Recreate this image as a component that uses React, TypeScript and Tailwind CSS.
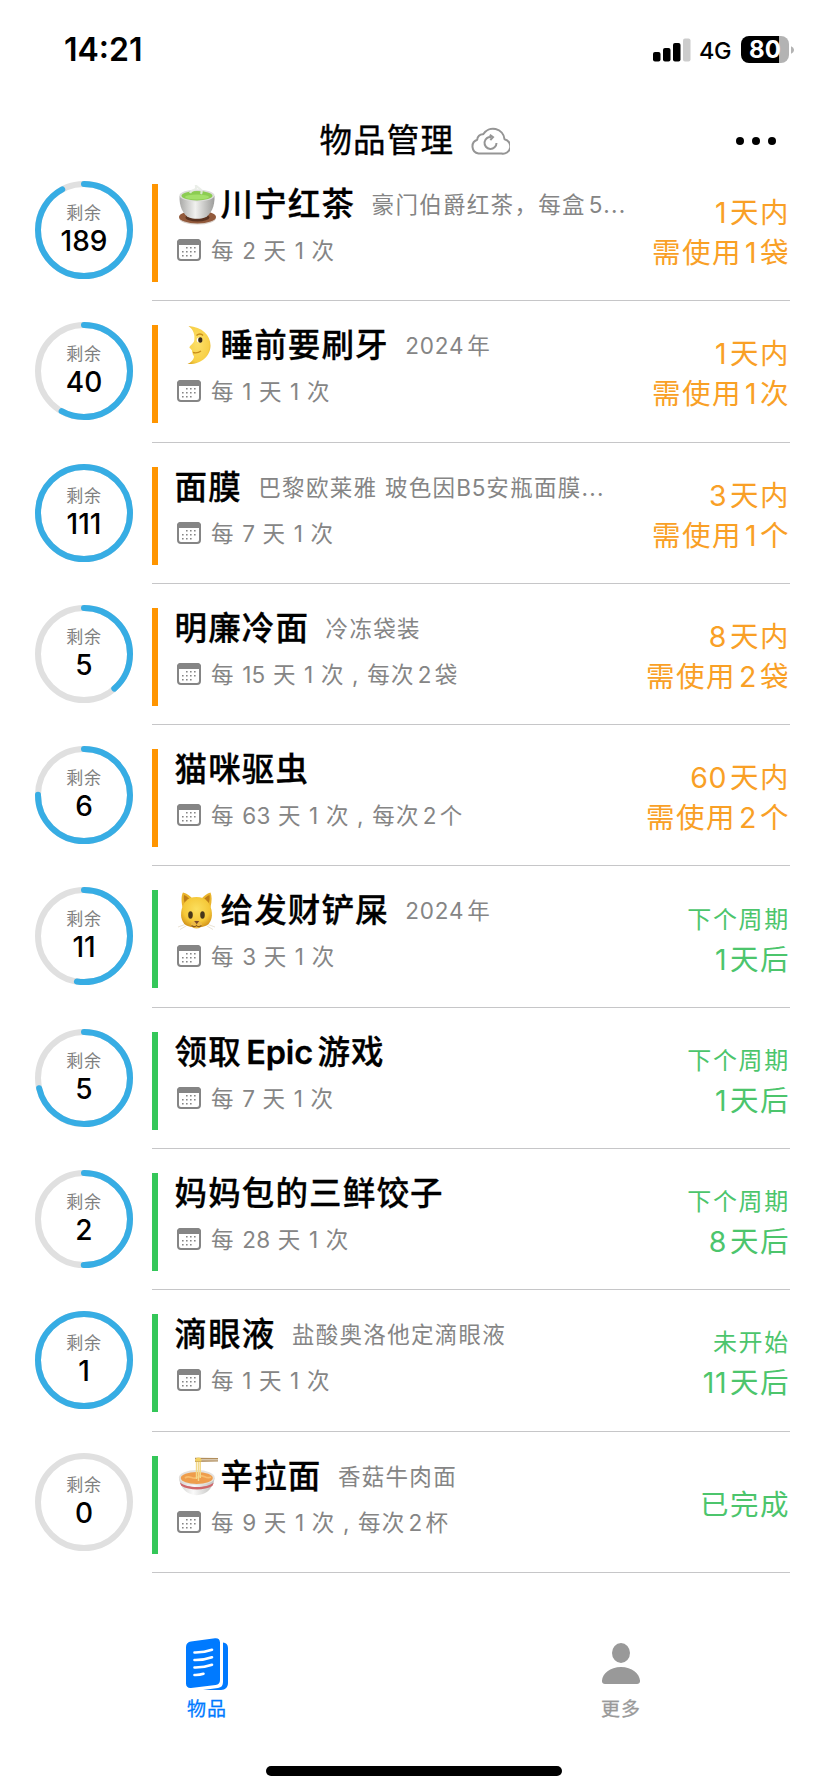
import React from "react";

type EmojiName = "tea" | "moon" | "cat" | "noodle";

type Item = {
  left: string;
  ratio: number;
  tone: "orange" | "green";
  emoji?: EmojiName;
  title: string;
  note?: string;
  cycle: string;
  status: string[];
};

const items: Item[] = [
  { left: "189", ratio: 0.92, tone: "orange", emoji: "tea", title: "川宁红茶", note: "豪门伯爵红茶，每盒5...", cycle: "每 2 天 1 次", status: ["1天内", "需使用1袋"] },
  { left: "40", ratio: 0.58, tone: "orange", emoji: "moon", title: "睡前要刷牙", note: "2024年", cycle: "每 1 天 1 次", status: ["1天内", "需使用1次"] },
  { left: "111", ratio: 1, tone: "orange", title: "面膜", note: "巴黎欧莱雅 玻色因B5安瓶面膜...", cycle: "每 7 天 1 次", status: ["3天内", "需使用1个"] },
  { left: "5", ratio: 0.385, tone: "orange", title: "明廉冷面", note: "冷冻袋装", cycle: "每 15 天 1 次 , 每次2袋", status: ["8天内", "需使用2袋"] },
  { left: "6", ratio: 0.75, tone: "orange", title: "猫咪驱虫", cycle: "每 63 天 1 次 , 每次2个", status: ["60天内", "需使用2个"] },
  { left: "11", ratio: 0.524, tone: "green", emoji: "cat", title: "给发财铲屎", note: "2024年", cycle: "每 3 天 1 次", status: ["下个周期", "1天后"] },
  { left: "5", ratio: 0.713, tone: "green", title: "领取Epic游戏", cycle: "每 7 天 1 次", status: ["下个周期", "1天后"] },
  { left: "2", ratio: 0.5, tone: "green", title: "妈妈包的三鲜饺子", cycle: "每 28 天 1 次", status: ["下个周期", "8天后"] },
  { left: "1", ratio: 1, tone: "green", title: "滴眼液", note: "盐酸奥洛他定滴眼液", cycle: "每 1 天 1 次", status: ["未开始", "11天后"] },
  { left: "0", ratio: 0, tone: "green", emoji: "noodle", title: "辛拉面", note: "香菇牛肉面", cycle: "每 9 天 1 次 , 每次2杯", status: ["已完成"] },
];

/** Sets Latin runs apart from the Chinese characters that touch them. */
function Mixed({ text, latin }: { text: string; latin: string }) {
  const parts = text.split(/([A-Za-z0-9]+)/);
  return (
    <>
      {parts.map((part, i) => {
        if (i % 2 === 0) return part;
        const model = /[A-Z]\d/.test(part);
        const touchesLeft = !model && /[\u3000-\u9fff]$/.test(parts[i - 1]);
        const touchesRight = !model && /^[\u3000-\u9fff]/.test(parts[i + 1]);
        return (
          <span key={i} className={`${latin} ${touchesLeft ? "ml-[3px]" : ""} ${touchesRight ? "mr-[3px]" : ""}`}>
            {part}
          </span>
        );
      })}
    </>
  );
}

function Ring({ value, ratio }: { value: string; ratio: number }) {
  const r = 46;
  const length = 2 * Math.PI * r;
  return (
    <div className="mt-[21px] ml-[35px] grid h-[98px] w-[98px] shrink-0">
      <svg viewBox="0 0 98 98" className="col-start-1 row-start-1 h-[98px] w-[98px] -rotate-90">
        <circle cx="49" cy="49" r={r} fill="none" stroke="#e0e0e0" strokeWidth="6" />
        {ratio > 0 && (
          <circle
            cx="49"
            cy="49"
            r={r}
            fill="none"
            stroke="#37ade4"
            strokeWidth="6"
            strokeLinecap={ratio < 1 ? "round" : "butt"}
            strokeDasharray={ratio < 1 ? `${length * ratio} ${length}` : undefined}
          />
        )}
      </svg>
      <div className="col-start-1 row-start-1 flex flex-col items-center pt-[20px]">
        <span className="h-[24px] text-[17px] leading-[24px] tracking-[0.7px] text-[#808080]">剩余</span>
        <span className="mt-[1px] text-[28px] leading-[30px] font-medium text-black">{value}</span>
      </div>
    </div>
  );
}

function Emoji({ name }: { name: EmojiName }) {
  const cls = "mr-[3px] ml-[3px] h-[40px] w-[40px] shrink-0";
  if (name === "tea")
    return (
      <svg viewBox="0 0 40 40" className={cls}>
        <defs>
          <linearGradient id="cup" x1="0" x2="1">
            <stop offset="0" stopColor="#a9a9a7" />
            <stop offset="0.45" stopColor="#f1f1ef" />
            <stop offset="1" stopColor="#9c9c9a" />
          </linearGradient>
        </defs>
        <ellipse cx="19.500" cy="33" rx="18.500" ry="6.600" fill="#d9cfc8" />
        <ellipse cx="19.500" cy="32" rx="18.500" ry="6.400" fill="#925a3c" />
        <ellipse cx="19.500" cy="32.500" rx="12" ry="4" fill="#5b3320" />
        <path d="M1.600 11C1 21 5 29.500 11 32.500c4 1.800 12 1.800 16 0C33 29.500 37 21 36.500 11Z" fill="url(#cup)" />
        <ellipse cx="19" cy="10.500" rx="17.500" ry="6" fill="#dcdcda" />
        <ellipse cx="19" cy="10.700" rx="15.500" ry="4.700" fill="#8ccc52" />
        <ellipse cx="19" cy="12" rx="12" ry="2.600" fill="#a4e06a" />
        <path d="M12 8c2-5 7-1 6-7 4 3 7 4 5 8" fill="none" stroke="#e6ebe4" strokeWidth="2.200" opacity="0.85" />
      </svg>
    );
  if (name === "moon")
    return (
      <svg viewBox="0 0 40 40" className={cls}>
        <defs>
          <radialGradient id="moon" cx="0.45" cy="0.45" r="0.65">
            <stop offset="0" stopColor="#fce06a" />
            <stop offset="0.75" stopColor="#f8d047" />
            <stop offset="1" stopColor="#dba51f" />
          </radialGradient>
        </defs>
        <path d="M10.500 0C24 1 32.500 9 32.500 19.500S23 39 9.500 38c3.500-1.500 5.800-4 6.500-7 .2-1.500-1.700-2-1.300-3.300.3-1-1.200-1.500-.7-2.500.3-1-.6-1.500-1-2-.7-1-1.800-1-1.500-2.200.6-1.700 3.600-3.200 4.500-5.400C17.500 9 15.500 3.500 10.500 0Z" fill="url(#moon)" />
        <ellipse cx="21.500" cy="14" rx="2.800" ry="2.500" fill="#fff" />
        <ellipse cx="22.300" cy="14" rx="2.100" ry="2.800" fill="#3b2a16" />
        <path d="M18.500 9.500c2-2 5-2 6.500 0" fill="none" stroke="#c98f1b" strokeWidth="1.300" />
        <path d="M15 26.500c3 .8 6 0 8-1.500" fill="none" stroke="#c98f1b" strokeWidth="1.300" />
      </svg>
    );
  if (name === "cat")
    return (
      <svg viewBox="0 0 40 40" className={cls}>
        <defs>
          <radialGradient id="cat" cx="0.5" cy="0.4" r="0.65">
            <stop offset="0" stopColor="#fbdf5e" />
            <stop offset="0.65" stopColor="#f5c838" />
            <stop offset="1" stopColor="#cf8d15" />
          </radialGradient>
        </defs>
        <path d="M4.500 16C3 9 3.500 4 5 1.500 9 2.500 13 5.500 15 8.500h8c2-3 6-6 9.500-7C34 5 34 10 32.500 16Z" fill="#eab42c" />
        <path d="M6 4c3 1 5 3.500 7 6l-6 3C6 10 5.500 7 6 4ZM31.500 4c-3 1-5 3.500-7 6l6 3c1-3 1.500-6 1-9Z" fill="#bd7d16" />
        <path d="M18.500 6C28 6 32 12 33.500 19c1.500 8-1 13-5 15.500-5 2.500-15 2.500-20 0C4.500 32 2 27 3.500 19 5 12 9 6 18.500 6Z" fill="url(#cat)" />
        <path d="M0 36l7-2.500M2 38.500l6-3.500M37 36l-7-2.500M35 38.500l-6-3.500" stroke="#e3dccb" strokeWidth="0.800" />
        <ellipse cx="18.500" cy="33.500" rx="5.500" ry="4" fill="#edbb45" />
        <ellipse cx="12.500" cy="24" rx="2.300" ry="3.700" fill="#47371a" />
        <ellipse cx="24.500" cy="24" rx="2.300" ry="3.700" fill="#47371a" />
        <path d="M16.200 30h5l-2.500 3.200Z" fill="#7b4b2a" />
        <path d="M13.500 34.500c2 1.700 4 1.300 5 0 1 1.300 3 1.700 5 0" fill="none" stroke="#8a5a18" strokeWidth="1.100" />
      </svg>
    );
  return (
    <svg viewBox="0 0 40 40" className={cls}>
      <defs>
        <linearGradient id="bowl" x1="0" x2="1">
          <stop offset="0" stopColor="#cfcfcd" />
          <stop offset="0.4" stopColor="#fafafa" />
          <stop offset="1" stopColor="#bdbdbb" />
        </linearGradient>
      </defs>
      <path d="M1 21C1.500 28 6.500 35 12.500 37c4 1.500 8.500 1.500 12.500 0 6-2 11-9 11.500-16Z" fill="url(#bowl)" />
      <path d="M1.800 25.500c8 6 26.500 6 34 0l-1.300 3.200c-8 5-23 5-31.200 0Z" fill="#d0676b" />
      <ellipse cx="18.800" cy="20.500" rx="17.900" ry="7.600" fill="#e4e1dd" />
      <ellipse cx="18.800" cy="21" rx="16" ry="5.900" fill="#ee9d4c" />
      <path d="M7 21c5-4 8 3 13-1s8 3 13 0" fill="none" stroke="#f8bd6e" strokeWidth="1.800" />
      <path d="M18.500 3v19M20.500 3v21M22.300 3v18" stroke="#f3d98a" strokeWidth="1.400" fill="none" />
      <path d="M17 .8 40 1v1.500L17 2.500ZM17 3.300l23-.1v1.400L17 5Z" fill="#b08d5c" />
      <path d="M17.200 4.500c0-3 1-4 3.300-4s3 1 3 4Z" fill="#f3d162" />
    </svg>
  );
}

function CalendarIcon() {
  return (
    <svg viewBox="0 0 24 22" className="mt-[3px] h-[22px] w-[24px] shrink-0">
      <rect x="1" y="1" width="22" height="20" rx="3" fill="none" stroke="#858585" strokeWidth="2" />
      <path d="M0 6V4a4 4 0 0 1 4-4h16a4 4 0 0 1 4 4v2Z" fill="#858585" />
      <g fill="#858585">
        {[9, 13, 17].map((y, row) =>
          [5, 9, 13, 17].map((x, col) =>
            (row === 0 && col === 0) || (row === 2 && col === 3) ? null : (
              <rect key={`${x}-${y}`} x={x} y={y - 1} width="1.600" height="1.500" />
            ),
          ),
        )}
      </g>
    </svg>
  );
}

function Row({ item }: { item: Item }) {
  const orange = item.tone === "orange";
  return (
    <li className="flex h-[141.3px]">
      <Ring value={item.left} ratio={item.ratio} />
      <div className="mr-[38px] ml-[19px] flex min-w-0 flex-1 border-b border-[#c6c6c8]">
        <div className={`mt-[24px] h-[98px] w-[6px] shrink-0 ${orange ? "bg-[#ff9500]" : "bg-[#34c759]"}`} />
        <div className="ml-[16px] min-w-0 flex-1">
          <div className="mt-[25px] flex h-[40px] items-center pl-[0.5px] whitespace-nowrap">
            {item.emoji && <Emoji name={item.emoji} />}
            <h2 className="text-[32.5px] leading-[40px] font-medium tracking-[1.15px] text-black [-webkit-text-stroke:0.3px_#000]">
              <Mixed text={item.title} latin="px-[1.5px] font-semibold tracking-[-0.2px]" />
            </h2>
            {item.note && (
              <p className="ml-[16.5px] text-[22.5px] leading-[40px] tracking-[1.3px] text-[#858585]">
                <Mixed text={item.note} latin="tracking-[0.8px]" />
              </p>
            )}
          </div>
          <div className="mt-[11px] flex h-[30px] items-start gap-[10px] pl-[3px] whitespace-nowrap">
            <CalendarIcon />
            <p className="text-[22.5px] leading-[30px] tracking-[1.25px] text-[#858585] [word-spacing:-0.2px]">
              <Mixed text={item.cycle} latin="tracking-[0.3px]" />
            </p>
          </div>
        </div>
        <div
          className={`flex shrink-0 flex-col items-end justify-center pt-[13px] pb-[7px] whitespace-nowrap ${orange ? "text-[#f9a026]" : "text-[#4cc56c]"}`}
        >
          {item.status.map((line, i) => (
            <span
              key={line}
              className={
                !orange && i === 0 && item.status.length > 1
                  ? "h-[40px] text-[24px] leading-[40px] tracking-[1.7px]"
                  : "h-[40px] text-[28.5px] leading-[40px] tracking-[1.5px]"
              }
            >
              <Mixed text={line} latin="tracking-[0.5px]" />
            </span>
          ))}
        </div>
      </div>
    </li>
  );
}

function StatusBar() {
  return (
    <div className="flex h-[99px] items-center justify-between pr-[34px] pl-[64px]">
      <span className="mt-[1px] text-[32px] leading-[40px] font-semibold">14:21</span>
      <div className="flex items-center">
        <svg viewBox="0 0 38 24" className="h-[24px] w-[38px]">
          <rect x="0" y="14" width="7.500" height="9.500" rx="2" />
          <rect x="10" y="10" width="7.500" height="13.500" rx="2" />
          <rect x="20" y="5" width="7.500" height="18.500" rx="2" />
          <rect x="30" y="0.500" width="7.500" height="23" rx="2" fill="#cccccc" />
        </svg>
        <span className="mt-[2px] ml-[8px] w-[34px] text-[23.5px] leading-[30px] font-medium tracking-[-0.3px]">4G</span>
        <div className="ml-[8px] flex h-[27px] w-[48px] items-center justify-center overflow-hidden rounded-[8px] bg-[linear-gradient(90deg,#000_38px,#b3b3b3_38px)] text-[24px] leading-[27px] font-bold text-white">
          80
        </div>
        <svg viewBox="0 0 4 10" className="ml-[2px] h-[10px] w-[3px]">
          <path d="M0 0c2.500 1 4 3 4 5S2.500 9 0 10Z" fill="#b3b3b3" />
        </svg>
      </div>
    </div>
  );
}

export default function App() {
  return (
    <div className="flex h-[1792px] w-[828px] flex-col overflow-hidden bg-white font-['Inter','Noto_Sans_CJK_SC',sans-serif] text-black">
      <StatusBar />
      <header className="grid h-[60.94px] shrink-0 grid-cols-[1fr_auto_1fr] items-center pt-[22px]">
        <h1 className="col-start-2 ml-[1px] text-[32.5px] leading-[40px] font-normal tracking-[1.15px] [-webkit-text-stroke:0.4px_#000]">
          <span className="flex items-center gap-[15.5px]">
            物品管理
            <svg viewBox="0 0 40 28" className="h-[28px] w-[40px]" fill="none" stroke="#959595" strokeWidth="2">
              <path d="M8.500 26.500h23a7.300 7.300 0 0 0 3-14.300A11.500 11.500 0 0 0 13.200 7.300 5.500 5.500 0 0 0 7.200 12.800 7.100 7.100 0 0 0 8.500 26.500Z" strokeLinejoin="round" />
              <path d="M21.500 10a6 6 0 1 0 5 6" />
              <path d="M19.800 7.800 23 10.200 20.300 13" />
            </svg>
          </span>
        </h1>
        <svg viewBox="0 0 40 8" className="mr-[52px] h-[8px] w-[40px] justify-self-end">
          <circle cx="4" cy="4" r="4" />
          <circle cx="20" cy="4" r="4" />
          <circle cx="36" cy="4" r="4" />
        </svg>
      </header>
      <ul>
        {items.map((item) => (
          <Row key={item.title} item={item} />
        ))}
      </ul>
      <nav className="mt-[65px] grid h-[128px] shrink-0 grid-cols-2">
        <div className="flex flex-col items-center text-[#007aff]">
          <svg viewBox="0 0 42 52" className="h-[52px] w-[42px] shrink-0">
            <path d="M5 3.500 29 .3c3-.4 5 1.200 5 4.200V42c0 3-1.500 4.500-4.500 5L5 50c-3 .3-5-1.500-5-4.500V9c0-3.200 2-5.100 5-5.500Z" fill="currentColor" />
            <path d="M37 4.500c3 .3 5 2.200 5 5.500v35c0 4-2.500 7-7 7H17l15-2c3.500-.5 5-2.500 5-6Z" fill="currentColor" />
            <path d="M8.500 14.500q9.500.2 17.500-2.700M8.500 22q9.500.2 17.500-2.700M8.500 29.500q9.500.2 17.500-2.700M8.500 37q5 .2 9-1.200" fill="none" stroke="#fff" strokeWidth="2.600" strokeLinecap="round" />
          </svg>
          <span className="mt-[7px] text-[19px] leading-[26px] tracking-[1px] [-webkit-text-stroke:0.3px_#007aff]">物品</span>
        </div>
        <div className="flex flex-col items-center text-[#999999]">
          <svg viewBox="0 0 38 52" className="h-[52px] w-[38px] shrink-0">
            <ellipse cx="19" cy="15" rx="9" ry="10" fill="currentColor" />
            <path d="M0 42.500C.5 35.500 8 29 19 29s18.500 6.500 19 13.500c.2 2.300-.8 3.500-3 3.500H3c-2.200 0-3.200-1.200-3-3.500Z" fill="currentColor" />
          </svg>
          <span className="mt-[7px] text-[19px] leading-[26px] tracking-[1px] [-webkit-text-stroke:0.3px_#999999]">更多</span>
        </div>
      </nav>
      <div className="h-[10px] w-[296px] shrink-0 self-center rounded-full bg-black" />
    </div>
  );
}
